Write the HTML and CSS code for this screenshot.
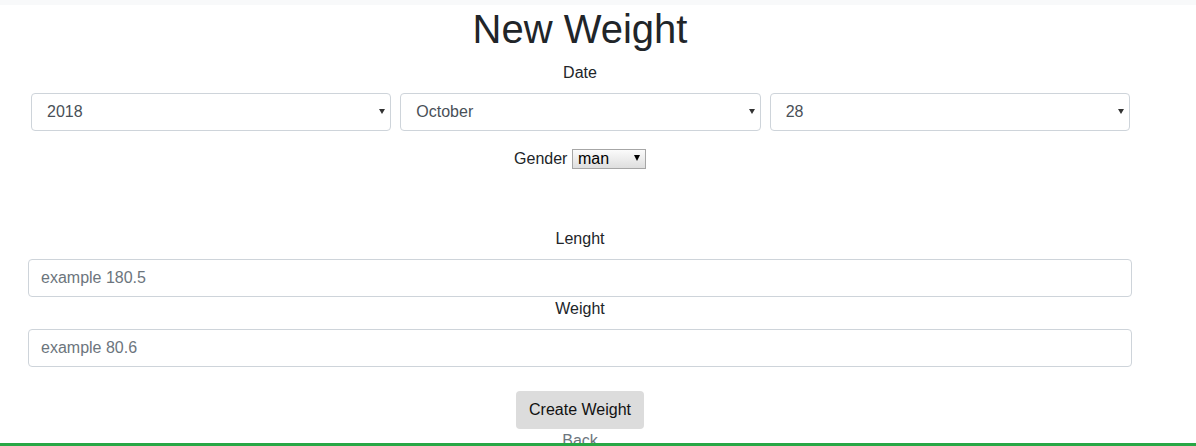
FILE: index.html
```html
<!DOCTYPE html>
<html lang="en">
<head>
<meta charset="utf-8">
<title>New Weight</title>
<link rel="stylesheet" href="styles.css">
</head>
<body>
<nav class="topbar"></nav>
<main class="page">
  <h1 class="title">New Weight</h1>
  <form class="weight-form">
    <div class="date-group">
      <label class="label">Date</label>
      <div class="date-row">
        <span class="select-wrap">
          <select class="form-select">
            <option>2018</option>
          </select>
        </span>
        <span class="select-wrap">
          <select class="form-select">
            <option>October</option>
          </select>
        </span>
        <span class="select-wrap">
          <select class="form-select">
            <option>28</option>
          </select>
        </span>
      </div>
    </div>
    <div class="gender-row">
      <label class="gender-label">Gender</label>
      <span class="mini-wrap">
        <select class="mini-select">
          <option>man</option>
          <option>woman</option>
        </select>
      </span>
    </div>
    <label class="label">Lenght</label>
    <input class="form-input" type="text" placeholder="example 180.5">
    <label class="label">Weight</label>
    <input class="form-input" type="text" placeholder="example 80.6">
    <div class="actions">
      <button class="btn" type="button">Create Weight</button>
    </div>
    <div class="back-row"><a class="back-link" href="#">Back</a></div>
  </form>
</main>
<footer class="footer-bar"></footer>
</body>
</html>
```

FILE: styles.css
```css
* {
  box-sizing: border-box;
}

body {
  margin: 0;
  font-family: "Liberation Sans", Arial, sans-serif;
  font-size: 16px;
  line-height: 1.5;
  color: #212529;
  background: #fff;
}

.topbar {
  height: 5px;
  background: #f8f9fa;
}

.page {
  width: 1104px;
  margin-left: 28px;
  text-align: center;
}

.title {
  font-size: 40px;
  font-weight: 500;
  line-height: 1.2;
  margin: 0 0 8px;
}

.label {
  display: block;
  margin-bottom: 8px;
}

.date-row {
  display: grid;
  grid-template-columns: repeat(3, 1fr);
  gap: 9px;
  margin: 0 2px 0 3px;
}

.select-wrap {
  position: relative;
  display: block;
}

.select-wrap::after {
  content: "";
  position: absolute;
  right: 6px;
  top: 16px;
  border-left: 3px solid transparent;
  border-right: 3px solid transparent;
  border-top: 5px solid #333;
  pointer-events: none;
}

.form-select {
  display: block;
  width: 100%;
  height: 38px;
  -webkit-appearance: none;
  appearance: none;
  border: 1px solid #ced4da;
  border-radius: 4px;
  background: #fff;
  padding: 0 20px 0 15px;
  font: inherit;
  color: #495057;
}

.gender-row {
  margin-top: 16px;
  margin-bottom: 56px;
}

.mini-wrap {
  position: relative;
  display: inline-block;
}

.mini-wrap::after {
  content: "";
  position: absolute;
  right: 6px;
  top: 8px;
  border-left: 3.5px solid transparent;
  border-right: 3.5px solid transparent;
  border-top: 6px solid #000;
  pointer-events: none;
}

.mini-select {
  -webkit-appearance: none;
  appearance: none;
  width: 74px;
  height: 20px;
  border: 1px solid #a6a6a6;
  border-radius: 0;
  background: linear-gradient(#fbfbfb, #dedede);
  padding: 0 0 0 5px;
  font-family: inherit;
  font-size: 16px;
  line-height: 18px;
  color: #000;
  text-align: left;
}

.form-input {
  display: block;
  width: 100%;
  height: 38px;
  border: 1px solid #ced4da;
  border-radius: 4px;
  padding: 6px 12px;
  font: inherit;
  color: #495057;
  background: #fff;
}

.form-input::placeholder {
  color: #6c757d;
}

.actions {
  margin-top: 24px;
}

.btn {
  height: 38px;
  padding: 6px 12px;
  border: 1px solid transparent;
  border-radius: 4px;
  background: #dcdcdc;
  font: inherit;
  line-height: 24px;
  color: #111;
}

.back-link {
  color: #6c757d;
  text-decoration: none;
}

.footer-bar {
  position: fixed;
  left: 0;
  right: 0;
  bottom: 0;
  height: 3px;
  background: #28a745;
}
```
